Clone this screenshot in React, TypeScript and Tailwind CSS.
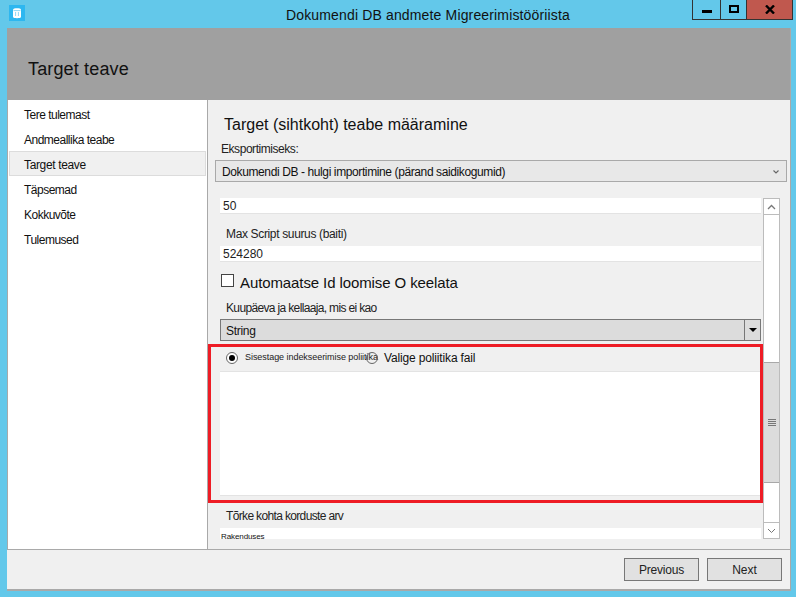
import React from "react";

const navItems = ["Tere tulemast", "Andmeallika teabe", "Target teave", "Täpsemad", "Kokkuvõte", "Tulemused"];

function Field({ value, className = "" }: { value: string; className?: string }) {
  return (
    <div className={`ml-[12px] h-[16px] w-[541px] bg-white border-b border-[#e3e3e3] pl-[3px] text-[12px] leading-[16px] text-[#222] ${className}`}>
      {value}
    </div>
  );
}

function Radio({ checked }: { checked?: boolean }) {
  return (
    <span className={`flex h-[12px] w-[12px] shrink-0 items-center justify-center rounded-full border border-[#666] ${checked ? "bg-white" : "bg-transparent"}`}>
      {checked && <span className="h-[6px] w-[6px] rounded-full bg-black" />}
    </span>
  );
}

function Scrollbar() {
  return (
    <div className="flex h-[341px] w-[17px] shrink-0 flex-col border border-[#bcbcbc] bg-white">
      <div className="flex h-[16px] items-center justify-center border-b border-[#bcbcbc]">
        <svg width="9" height="6" viewBox="0 0 9 6" fill="none" stroke="#777" strokeWidth="1.3">
          <path d="M1 5l3.5-3.5L8 5" />
        </svg>
      </div>
      <div className="h-[147px]" />
      <div className="flex h-[121px] items-center justify-center border-y border-[#a8a8a8] bg-[#dcdcdc]">
        <div className="flex w-[8px] flex-col gap-[1px]">
          <span className="h-[1px] bg-[#777]" />
          <span className="h-[1px] bg-[#777]" />
          <span className="h-[1px] bg-[#777]" />
          <span className="h-[1px] bg-[#777]" />
        </div>
      </div>
      <div className="flex-1" />
      <div className="flex h-[16px] items-center justify-center border-t border-[#bcbcbc]">
        <svg width="9" height="6" viewBox="0 0 9 6" fill="none" stroke="#777" strokeWidth="1">
          <path d="M1 1l3.5 3.5L8 1" />
        </svg>
      </div>
    </div>
  );
}

export default function App() {
  return (
    <div className="flex h-[597px] w-[796px] flex-col overflow-hidden bg-[#63c8ea] font-['Liberation_Sans',sans-serif] text-[#111]">
      {/* title bar */}
      <div className="relative flex h-[28px] shrink-0 items-start">
        <div className="ml-[9px] mt-[5px] flex h-[16px] w-[16px] items-center justify-center bg-[#2db7f0]">
          <svg width="10" height="12" viewBox="0 0 10 12" fill="none">
            <path d="M1 2.500C1 .8 9 .8 9 2.500V10c0 1.600-8 1.600-8 0z" fill="#fff" />
            <path d="M1.500 3.600h7M3.600 5v4M6.400 5v4" stroke="#8fd8f5" strokeWidth="1" />
          </svg>
        </div>
        <div className="ml-[261px] mt-[7px] text-[14px] leading-[16px] tracking-[0.15px] text-[#111]">
          Dokumendi DB andmete Migreerimistööriista
        </div>
        <div className="absolute left-[692px] top-0 flex h-[20px]">
          <div className="flex h-[20px] w-[29px] items-end justify-center border-x border-b border-[#333] pb-[6px]">
            <span className="h-[3px] w-[10px] bg-black" />
          </div>
          <div className="flex h-[20px] w-[26px] items-start justify-center border-r border-b border-[#333] pt-[5px]">
            <span className="h-[8px] w-[10px] border-2 border-black" />
          </div>
          <div className="flex h-[20px] w-[46px] items-center justify-center border-r border-b border-[#333] bg-[#c0584e]">
            <svg width="10" height="9" viewBox="0 0 10 9" stroke="#000" strokeWidth="2.4">
              <path d="M1 .5l8 8M9 .5l-8 8" />
            </svg>
          </div>
        </div>
      </div>

      {/* client area */}
      <div className="ml-[7px] flex h-[563px] w-[784px] flex-col border-r border-b-2 border-[#a9a9a9] bg-[#f0f0f0]">
        <div className="flex h-[72px] shrink-0 items-center bg-[#a0a0a0] pl-[21px] pt-[10px] text-[18px] tracking-[0.15px] text-[#111]">
          Target teave
        </div>

        <div className="flex h-[450px] shrink-0 border-b border-[#a9a9a9]">
          {/* left nav */}
          <div className="flex w-[201px] shrink-0 flex-col border-x border-[#a9a9a9] bg-white px-[1px] pt-[1px]">
            {navItems.map((item) => (
              <div
                key={item}
                className={`flex h-[25px] items-center border pl-[14px] pt-[3px] text-[12px] text-[#111] ${
                  item === "Target teave"
                    ? "border-[#dcdcdc] bg-[#f0f0f0] tracking-[-0.35px]"
                    : "border-transparent tracking-[-0.5px]"
                }`}
              >
                {item}
              </div>
            ))}
          </div>

          {/* main panel */}
          <div className="flex min-w-0 flex-1 flex-col">
            <div className="ml-[16px] mt-[15px] text-[16px] leading-[20px] text-[#111]">
              Target (sihtkoht) teabe määramine
            </div>
            <div className="ml-[13px] mt-[7px] text-[12px] leading-[14px] tracking-[-0.45px] text-[#222]">
              Eksportimiseks:
            </div>
            <div className="ml-[7px] mt-[4px] flex h-[22px] w-[572px] items-center justify-between border border-[#a9a9a9] bg-[#e8e8e8] pl-[6px] pr-[7px] pt-[1px] text-[12px] tracking-[-0.39px]">
              <span>Dokumendi DB - hulgi importimine (pärand saidikogumid)</span>
              <svg width="6" height="4" viewBox="0 0 6 4" fill="none" stroke="#666" strokeWidth="1.1">
                <path d="M.5.5L3 3 5.500.5" />
              </svg>
            </div>

            <div className="mt-[16px] flex h-[341px]">
              <div className="h-[341px] w-[555px] overflow-hidden">
                <Field value="50" />
                <div className="ml-[18px] mt-[13px] text-[12px] leading-[14px] tracking-[-0.35px] text-[#222]">
                  Max Script suurus (baiti)
                </div>
                <Field value="524280" className="mt-[5px]" />
                <div className="ml-[13px] mt-[12px] flex items-start gap-[6px]">
                  <span className="h-[13px] w-[13px] border border-[#444] bg-white" />
                  <span className="text-[15px] leading-[18px] tracking-[-0.1px]">Automaatse Id loomise O keelata</span>
                </div>
                <div className="ml-[18px] mt-[9px] text-[12px] leading-[14px] tracking-[-0.65px] text-[#222]">
                  Kuupäeva ja kellaaja, mis ei kao
                </div>
                <div className="ml-[12px] mt-[4px] flex h-[22px] w-[541px] items-center justify-between border border-[#777] bg-[#dcdcdc] pl-[5px] text-[12px] tracking-[-0.3px]">
                  <span className="pt-[2px]">String</span>
                  <span className="flex h-full w-[16px] items-center justify-center border-l border-[#777]">
                    <span className="h-0 w-0 border-x-[4px] border-t-[4px] border-x-transparent border-t-black" />
                  </span>
                </div>

                {/* highlighted policy box */}
                <div className="mt-[3px] h-[159px] w-[555px] border-[3px] border-[#ee1c25] pl-[9px]">
                  <div className="relative flex h-[24px] items-center pb-[2px] pl-[6px]">
                    <Radio checked />
                    <span className="ml-[7px] whitespace-nowrap text-[9px] tracking-[-0.05px] text-[#222]">
                      Sisestage indekseerimise poliitika
                    </span>
                    <span className="absolute left-[146px] top-[2px] flex items-center gap-[6px] whitespace-nowrap text-[12px] tracking-[-0.15px]">
                      <Radio />
                      Valige poliitika fail
                    </span>
                  </div>
                  <div className="h-[125px] w-[540px] border-y border-[#e3e3e3] bg-white" />
                </div>

                <div className="ml-[18px] mt-[6px] text-[12px] leading-[14px] tracking-[-0.65px] text-[#222]">
                  Tõrke kohta korduste arv
                </div>
                <div className="ml-[12px] mt-[5px] h-[16px] w-[541px] bg-white pl-[1px] pt-[4px] text-[8px] leading-[10px] tracking-[-0.1px] text-[#111]">
                  Rakenduses
                </div>
              </div>
              <Scrollbar />
            </div>
          </div>
        </div>

        {/* footer */}
        <div className="flex flex-1 items-start justify-end gap-[8px] pr-[8px] pt-[8px]">
          <button className="h-[23px] w-[75px] border border-[#777] bg-[#e1e1e1] text-[12px] tracking-[-0.2px] text-[#222]">Previous</button>
          <button className="h-[23px] w-[75px] border border-[#777] bg-[#e1e1e1] text-[12px] text-[#222]">Next</button>
        </div>
      </div>
    </div>
  );
}
